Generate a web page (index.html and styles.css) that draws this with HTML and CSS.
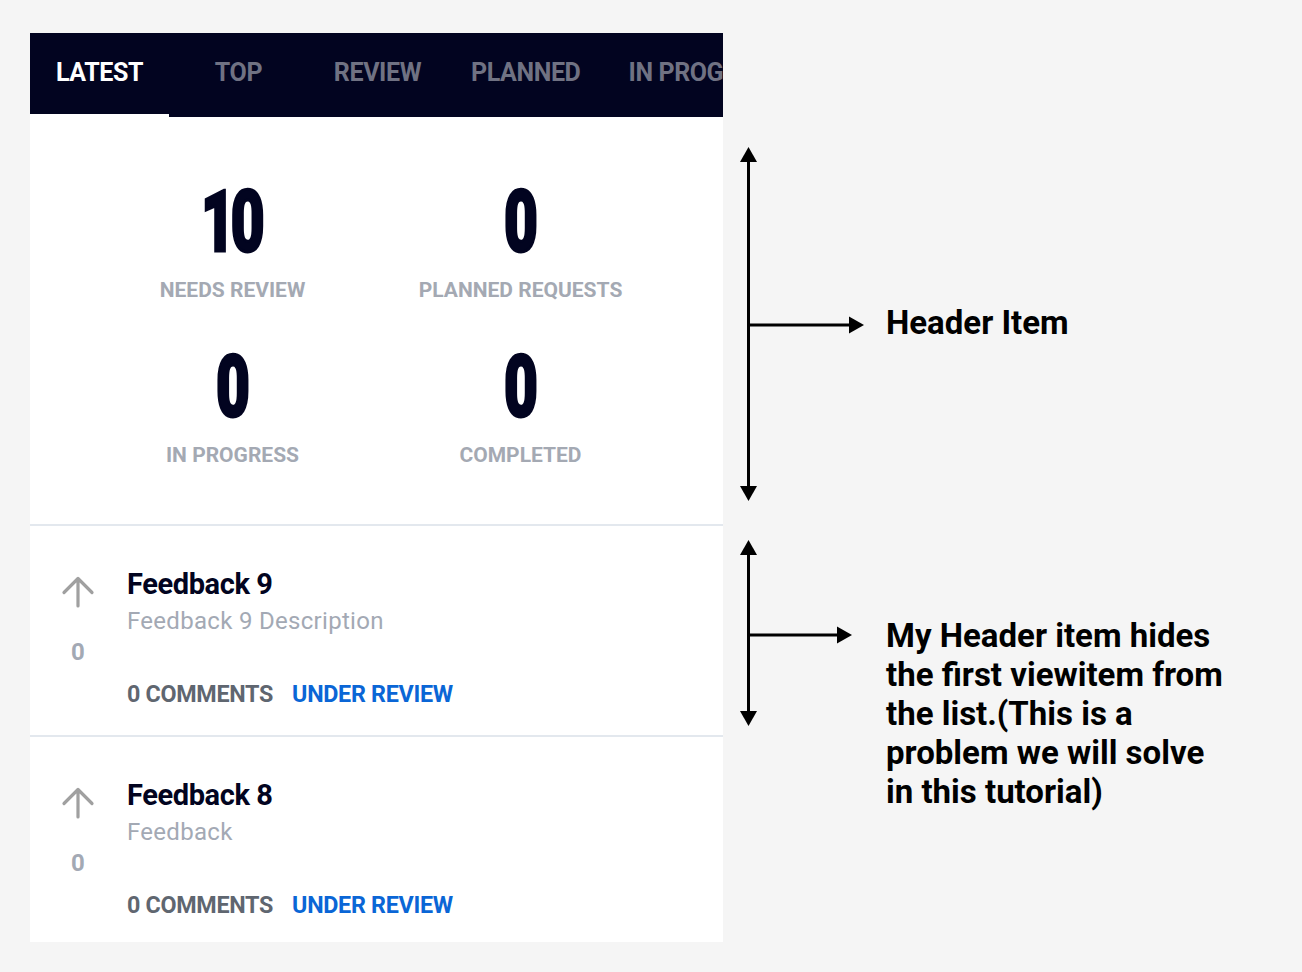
FILE: index.html
```html
<!DOCTYPE html>
<html lang="en">
<head>
<meta charset="utf-8">
<title>Feedback list</title>
<link rel="stylesheet" href="styles.css">
</head>
<body>
<div class="page">
  <div class="panel">
    <nav class="tabs">
      <div class="tab active">LATEST</div>
      <div class="tab">TOP</div>
      <div class="tab">REVIEW</div>
      <div class="tab">PLANNED</div>
      <div class="tab">IN PROG</div>
    </nav>
    <section class="stats">
      <div class="stat"><div class="num"><span>10</span></div><div class="label">NEEDS REVIEW</div></div>
      <div class="stat"><div class="num"><span>0</span></div><div class="label">PLANNED REQUESTS</div></div>
      <div class="stat"><div class="num"><span>0</span></div><div class="label">IN PROGRESS</div></div>
      <div class="stat"><div class="num"><span>0</span></div><div class="label">COMPLETED</div></div>
    </section>
    <article class="item">
      <div class="vote">
        <svg class="up" width="34" height="32" viewBox="0 0 34 32"><path d="M17 30V3M3 16.5L17 2.5L31 16.5" fill="none" stroke="#a0a0a0" stroke-width="3.2" stroke-linecap="round" stroke-linejoin="round"/></svg>
        <div class="count">0</div>
      </div>
      <div class="body">
        <div class="title">Feedback 9</div>
        <div class="desc">Feedback 9 Description</div>
        <div class="meta"><span class="comments">0 COMMENTS</span><span class="status">UNDER REVIEW</span></div>
      </div>
    </article>
    <article class="item">
      <div class="vote">
        <svg class="up" width="34" height="32" viewBox="0 0 34 32"><path d="M17 30V3M3 16.5L17 2.5L31 16.5" fill="none" stroke="#a0a0a0" stroke-width="3.2" stroke-linecap="round" stroke-linejoin="round"/></svg>
        <div class="count">0</div>
      </div>
      <div class="body">
        <div class="title">Feedback 8</div>
        <div class="desc">Feedback</div>
        <div class="meta"><span class="comments">0 COMMENTS</span><span class="status">UNDER REVIEW</span></div>
      </div>
    </article>
  </div>
  <aside class="annot">
    <div class="note note-header">
      <svg class="arrow" width="130" height="356" viewBox="0 0 130 356">
        <path d="M8.5 14V342M8.5 179H111" stroke="#000" stroke-width="3" fill="none"/>
        <polygon points="0,16 8.5,1 17,16" fill="#000"/>
        <polygon points="0,340 8.5,355 17,340" fill="#000"/>
        <polygon points="109,170.5 124,179 109,187.5" fill="#000"/>
      </svg>
      <div class="note-text">Header Item</div>
    </div>
    <div class="note note-problem">
      <svg class="arrow" width="130" height="190" viewBox="0 0 130 190">
        <path d="M8.5 14V176M8.5 97H99" stroke="#000" stroke-width="3" fill="none"/>
        <polygon points="0,17 8.5,2 17,17" fill="#000"/>
        <polygon points="0,173 8.5,188 17,173" fill="#000"/>
        <polygon points="97,88.5 112,97 97,105.5" fill="#000"/>
      </svg>
      <div class="note-text">My Header item hides<br>the first viewitem from<br>the list.(This is a<br>problem we will solve<br>in this tutorial)</div>
    </div>
  </aside>
</div>
</body>
</html>
```
FILE: styles.css
```css
html, body {
  margin: 0;
  padding: 0;
  background: #f5f5f5;
  font-family: Roboto, "Liberation Sans", sans-serif;
}
.page {
  display: flex;
  align-items: flex-start;
  padding: 33px 0 0 30px;
}
.panel {
  width: 693px;
  height: 909px;
  background: #ffffff;
  overflow: hidden;
  flex: none;
}
.tabs {
  display: flex;
  height: 84px;
  background: #020420;
  overflow: hidden;
  white-space: nowrap;
}
.tab {
  flex: none;
  min-width: 139px;
  box-sizing: border-box;
  padding: 0 24px;
  text-align: center;
  line-height: 80px;
  font-size: 25px;
  font-weight: 700;
  letter-spacing: -0.4px;
  color: #707283;
}
.tab.active {
  color: #ffffff;
  box-shadow: inset 0 -3px 0 #ffffff;
}
.stats {
  display: grid;
  grid-template-columns: 288px 288px;
  justify-content: center;
  row-gap: 43px;
  padding: 65px 0 55px;
  border-bottom: 2px solid #e3e8ee;
  text-align: center;
}
.num {
  height: 80px;
  line-height: 80px;
  font-size: 86px;
  font-weight: 900;
  color: #020420;
}
.num span {
  display: inline-block;
  transform: translateX(-2px) scaleX(0.68);
  -webkit-text-stroke: 3px #020420;
  letter-spacing: -6px;
}
.label {
  margin-top: 14px;
  line-height: 28px;
  font-size: 21px;
  font-weight: 700;
  color: #a4a9b3;
}
.item {
  display: flex;
  height: 209px;
  padding-left: 30px;
  border-bottom: 2px solid #e3e8ee;
}
.vote {
  width: 36px;
  display: flex;
  flex-direction: column;
  align-items: center;
  padding-top: 50px;
}
.up {
  display: block;
}
.count {
  margin-top: 30px;
  font-size: 24px;
  font-weight: 700;
  line-height: 28px;
  color: #a3a9b4;
}
.body {
  margin-left: 31px;
  padding-top: 41px;
}
.title {
  font-size: 29px;
  line-height: 34px;
  font-weight: 700;
  letter-spacing: -0.4px;
  color: #020420;
}
.desc {
  margin-top: 5px;
  font-size: 24px;
  line-height: 30px;
  letter-spacing: 0.3px;
  color: #a3a9b4;
}
.meta {
  margin-top: 44px;
  display: flex;
  gap: 19px;
  font-size: 23.3px;
  line-height: 28px;
  font-weight: 700;
  letter-spacing: -0.3px;
}
.comments {
  color: #5f6670;
}
.status {
  color: #0a66d6;
}
.annot {
  margin-left: 17px;
  padding-top: 113px;
  display: flex;
  flex-direction: column;
  gap: 36px;
}
.note {
  display: flex;
  align-items: flex-start;
}
.arrow {
  display: block;
  flex: none;
}
.note-text {
  margin-left: 16px;
  font-size: 33px;
  line-height: 39px;
  font-weight: 700;
  color: #000;
  white-space: nowrap;
}
.note-header .note-text {
  margin-top: 157px;
}
.note-problem .note-text {
  margin-top: 78px;
}
```
